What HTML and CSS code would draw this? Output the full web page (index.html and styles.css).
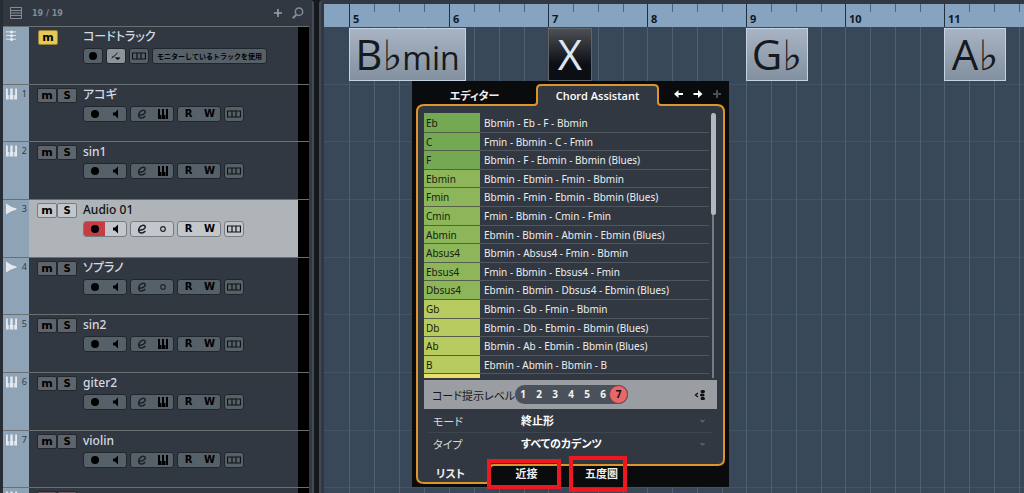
FILE: index.html
```html
<!DOCTYPE html>
<html lang="ja">
<head>
<meta charset="utf-8">
<title>Project</title>
<link rel="stylesheet" href="styles.css">
</head>
<body>
<svg class="defs" width="0" height="0" aria-hidden="true">
  <symbol id="dot" viewBox="0 0 10 10"><circle cx="5" cy="5" r="4"/></symbol>
  <symbol id="ring" viewBox="0 0 10 10"><circle cx="5" cy="5" r="2.3" fill="none" stroke="#222" stroke-width="1.2"/></symbol>
  <symbol id="speaker" viewBox="0 0 10 10"><path d="M2 3.5h2L7 .5v9L4 6.500H2z"/></symbol>
  <symbol id="edit" viewBox="0 0 10 10"><path d="M2 6.200C5 6.200 8.500 5 8.300 2.800 8 .6 4.500.8 2.700 3.200 1 5.500 1.300 8.700 4 8.900 5.800 9 7.300 8.200 8.300 7" fill="none" stroke="#1b2025" stroke-width="1.500"/></symbol>
  <symbol id="keys" viewBox="0 0 12 10"><path d="M1 0h2v6h1V10H1zM5 0h2v6h1v4H4.500V6H5zM9 0h2v10H8.500V6H9z"/></symbol>
  <symbol id="lanes" viewBox="0 0 14 8"><path d="M.5 1h13v6H.5zM5 1v6M9 1v6" fill="none" stroke="#111" stroke-width="1.2"/></symbol>
  <symbol id="piano" viewBox="0 0 12 12"><path d="M0 0h2v7h1v5H0zM4 7h.7V0h2.600v7H8v5H4zM10 0h2v12H9V7h1z"/></symbol>
  <symbol id="wave" viewBox="0 0 12 12"><path d="M0 0Q5 4 11.500 5.500v1Q5 8 0 12z"/></symbol>
  <symbol id="chords" viewBox="0 0 12 12"><path d="M0 1.500h11M0 5.500h11M0 9.500h11" stroke="#e4eaf0"/><circle cx="6" cy="1.700" r="1.700"/><circle cx="6" cy="5.700" r="1.700"/><circle cx="6" cy="9.700" r="1.700"/></symbol>
</svg>
<div class="app">
  <section class="tracks">
    <header class="tracks-head">
      <svg class="list-icon" viewBox="0 0 12 12"><path d="M.5.5h11v11H.5zM1 3.500h10M1 6h10M1 8.500h10" fill="none" stroke="#858b91"/></svg>
      <span class="count">19 / 19</span>
      <button class="plain" aria-label="Add track"><svg viewBox="0 0 8 8" width="8" height="8"><path d="M4 0v8M0 4h8" stroke="#9aa0a6" stroke-width="1.600"/></svg></button>
      <button class="plain" aria-label="Search"><svg viewBox="0 0 12 12" width="12" height="12"><circle cx="7" cy="4.700" r="3.700" fill="none" stroke="#858b91" stroke-width="1.500"/><path d="M4.500 7.500L.8 11.300" stroke="#858b91" stroke-width="2"/></svg></button>
    </header>
    <div class="track-list">
      <article class="track">
        <div class="strip"><svg class="kind"><use href="#chords"/></svg></div>
        <div class="ms"><button class="on">m</button></div>
        <div class="info"><h2>コードトラック</h2><div class="ctl">
          <span class="grp one"><button aria-label="Record"><svg><use href="#dot"/></svg></button></span>
          <span class="grp one lit"><button aria-label="Voicing"><svg viewBox="0 0 12 10"><path d="M1 8L8 1" stroke="#111" stroke-width="1.200"/><path d="M1 5.500h3M5 7h6L8 9.500z" stroke="#111" stroke-width=".6"/></svg></button></span>
          <span class="grp one"><button aria-label="Lanes"><svg class="lane"><use href="#lanes"/></svg></button></span>
          <span class="grp"><button class="monitor">モニターしているトラックを使用</button></span>
        </div></div><div class="meter"></div>
      </article>
      <article class="track">
        <div class="strip"><svg class="kind"><use href="#piano"/></svg><span>1</span></div>
        <div class="ms"><button>m</button><button>s</button></div>
        <div class="info"><h2>アコギ</h2><div class="ctl">
          <span class="grp"><button aria-label="Record"><svg><use href="#dot"/></svg></button><button aria-label="Monitor"><svg><use href="#speaker"/></svg></button></span>
          <span class="grp"><button aria-label="Edit"><svg><use href="#edit"/></svg></button><button aria-label="Instrument"><svg class="key"><use href="#keys"/></svg></button></span>
          <span class="grp"><button>R</button><button>W</button></span>
          <span class="grp one"><button aria-label="Lanes"><svg class="lane"><use href="#lanes"/></svg></button></span>
        </div></div><div class="meter"></div>
      </article>
      <article class="track">
        <div class="strip"><svg class="kind"><use href="#piano"/></svg><span>2</span></div>
        <div class="ms"><button>m</button><button>s</button></div>
        <div class="info"><h2>sin1</h2><div class="ctl">
          <span class="grp"><button aria-label="Record"><svg><use href="#dot"/></svg></button><button aria-label="Monitor"><svg><use href="#speaker"/></svg></button></span>
          <span class="grp"><button aria-label="Edit"><svg><use href="#edit"/></svg></button><button aria-label="Instrument"><svg class="key"><use href="#keys"/></svg></button></span>
          <span class="grp"><button>R</button><button>W</button></span>
          <span class="grp one"><button aria-label="Lanes"><svg class="lane"><use href="#lanes"/></svg></button></span>
        </div></div><div class="meter"></div>
      </article>
      <article class="track selected">
        <div class="strip"><svg class="kind"><use href="#wave"/></svg><span>3</span></div>
        <div class="ms"><button>m</button><button>s</button></div>
        <div class="info"><h2>Audio 01</h2><div class="ctl">
          <span class="grp"><button class="armed" aria-label="Record"><svg><use href="#dot"/></svg></button><button aria-label="Monitor"><svg><use href="#speaker"/></svg></button></span>
          <span class="grp"><button aria-label="Edit"><svg><use href="#edit"/></svg></button><button aria-label="Channels"><svg><use href="#ring"/></svg></button></span>
          <span class="grp"><button>R</button><button>W</button></span>
          <span class="grp one"><button aria-label="Lanes"><svg class="lane"><use href="#lanes"/></svg></button></span>
        </div></div><div class="meter"></div>
      </article>
      <article class="track">
        <div class="strip"><svg class="kind"><use href="#wave"/></svg><span>4</span></div>
        <div class="ms"><button>m</button><button>s</button></div>
        <div class="info"><h2>ソプラノ</h2><div class="ctl">
          <span class="grp"><button aria-label="Record"><svg><use href="#dot"/></svg></button><button aria-label="Monitor"><svg><use href="#speaker"/></svg></button></span>
          <span class="grp"><button aria-label="Edit"><svg><use href="#edit"/></svg></button><button aria-label="Channels"><svg><use href="#ring"/></svg></button></span>
          <span class="grp"><button>R</button><button>W</button></span>
          <span class="grp one"><button aria-label="Lanes"><svg class="lane"><use href="#lanes"/></svg></button></span>
        </div></div><div class="meter"></div>
      </article>
      <article class="track">
        <div class="strip"><svg class="kind"><use href="#piano"/></svg><span>5</span></div>
        <div class="ms"><button>m</button><button>s</button></div>
        <div class="info"><h2>sin2</h2><div class="ctl">
          <span class="grp"><button aria-label="Record"><svg><use href="#dot"/></svg></button><button aria-label="Monitor"><svg><use href="#speaker"/></svg></button></span>
          <span class="grp"><button aria-label="Edit"><svg><use href="#edit"/></svg></button><button aria-label="Instrument"><svg class="key"><use href="#keys"/></svg></button></span>
          <span class="grp"><button>R</button><button>W</button></span>
          <span class="grp one"><button aria-label="Lanes"><svg class="lane"><use href="#lanes"/></svg></button></span>
        </div></div><div class="meter"></div>
      </article>
      <article class="track">
        <div class="strip"><svg class="kind"><use href="#piano"/></svg><span>6</span></div>
        <div class="ms"><button>m</button><button>s</button></div>
        <div class="info"><h2>giter2</h2><div class="ctl">
          <span class="grp"><button aria-label="Record"><svg><use href="#dot"/></svg></button><button aria-label="Monitor"><svg><use href="#speaker"/></svg></button></span>
          <span class="grp"><button aria-label="Edit"><svg><use href="#edit"/></svg></button><button aria-label="Instrument"><svg class="key"><use href="#keys"/></svg></button></span>
          <span class="grp"><button>R</button><button>W</button></span>
          <span class="grp one"><button aria-label="Lanes"><svg class="lane"><use href="#lanes"/></svg></button></span>
        </div></div><div class="meter"></div>
      </article>
      <article class="track">
        <div class="strip"><svg class="kind"><use href="#piano"/></svg><span>7</span></div>
        <div class="ms"><button>m</button><button>s</button></div>
        <div class="info"><h2>violin</h2><div class="ctl">
          <span class="grp"><button aria-label="Record"><svg><use href="#dot"/></svg></button><button aria-label="Monitor"><svg><use href="#speaker"/></svg></button></span>
          <span class="grp"><button aria-label="Edit"><svg><use href="#edit"/></svg></button><button aria-label="Instrument"><svg class="key"><use href="#keys"/></svg></button></span>
          <span class="grp"><button>R</button><button>W</button></span>
          <span class="grp one"><button aria-label="Lanes"><svg class="lane"><use href="#lanes"/></svg></button></span>
        </div></div><div class="meter"></div>
      </article>
      <article class="track">
        <div class="strip"><svg class="kind"><use href="#piano"/></svg></div>
        <div class="ms muted"><button aria-label="Mute"></button><button aria-label="Solo"></button></div>
        <div class="info"></div><div class="meter"></div>
      </article>
    </div>
  </section>

  <main class="timeline">
    <div class="bars">
      <div class="bar lead"><div class="tick"></div><div class="lane-area"></div></div>
      <div class="bar wide"><div class="tick">5</div><div class="lane-area"><div class="chord c-min"><span>B</span><i>♭</i><small>min</small></div></div></div>
      <div class="bar"><div class="tick">6</div><div class="lane-area"></div></div>
      <div class="bar"><div class="tick">7</div><div class="lane-area"><div class="chord c-x"><span>X</span></div></div></div>
      <div class="bar"><div class="tick">8</div><div class="lane-area"></div></div>
      <div class="bar"><div class="tick">9</div><div class="lane-area"><div class="chord c-flat"><span>G</span><i>♭</i></div></div></div>
      <div class="bar"><div class="tick">10</div><div class="lane-area"></div></div>
      <div class="bar last"><div class="tick">11</div><div class="lane-area"><div class="chord c-flat"><span>A</span><i>♭</i></div></div></div>
    </div>
  </main>

  <aside class="popup">
    <svg class="frame" viewBox="0 0 317 406" aria-hidden="true"><path d="M5 396V31q0-7 7-7H122q3 0 3-3V8q0-4 4-4H242q4 0 4 4V21q0 3 3 3H305q7 0 7 7V378q0 6-6 6H82q-4 0-4 4v10q0 4-4 4H12q-7 0-7-6z" fill="#313841" stroke="#dc942c" stroke-width="2"/></svg>
    <nav class="tabs">
      <button>エディター</button>
      <button class="current">Chord Assistant</button>
      <span class="nav-icons">
        <button class="plain" aria-label="Back"><svg viewBox="0 0 10 10"><path d="M0 5l4.500-4v3H9v2H4.500v3z"/></svg></button>
        <button class="plain" aria-label="Forward"><svg viewBox="0 0 10 10"><path d="M9.500 5L5 1v3H.5v2H5v3z"/></svg></button>
        <button class="plain dim" aria-label="Add"><svg viewBox="0 0 10 10"><path d="M4 1h2v3h3v2H6v3H4V6H1V4h3z"/></svg></button>
      </span>
    </nav>
    <div class="body">
      <div class="scroll">
        <table class="list">
          <tr class="g1"><th>Eb</th><td>Bbmin - Eb - F - Bbmin</td></tr>
          <tr class="g1"><th>C</th><td>Fmin - Bbmin - C - Fmin</td></tr>
          <tr class="g1"><th>F</th><td>Bbmin - F - Ebmin - Bbmin (Blues)</td></tr>
          <tr class="g2"><th>Ebmin</th><td>Bbmin - Ebmin - Fmin - Bbmin</td></tr>
          <tr class="g2"><th>Fmin</th><td>Bbmin - Fmin - Ebmin - Bbmin (Blues)</td></tr>
          <tr class="g2"><th>Cmin</th><td>Fmin - Bbmin - Cmin - Fmin</td></tr>
          <tr class="g2"><th>Abmin</th><td>Ebmin - Bbmin - Abmin - Ebmin (Blues)</td></tr>
          <tr class="g2"><th>Absus4</th><td>Bbmin - Absus4 - Fmin - Bbmin</td></tr>
          <tr class="g2"><th>Ebsus4</th><td>Fmin - Bbmin - Ebsus4 - Fmin</td></tr>
          <tr class="g2"><th>Dbsus4</th><td>Ebmin - Bbmin - Dbsus4 - Ebmin (Blues)</td></tr>
          <tr class="g3"><th>Gb</th><td>Bbmin - Gb - Fmin - Bbmin</td></tr>
          <tr class="g3"><th>Db</th><td>Bbmin - Db - Ebmin - Bbmin (Blues)</td></tr>
          <tr class="g3"><th>Ab</th><td>Bbmin - Ab - Ebmin - Bbmin (Blues)</td></tr>
          <tr class="g3"><th>B</th><td>Ebmin - Abmin - Bbmin - B</td></tr>
          <tr class="g4"><th></th><td></td></tr>
        </table>
        <div class="rail"><div class="thumb"></div></div>
      </div>
      <div class="level">
        <span class="level-name">コード提示レベル</span>
        <div class="pill" role="radiogroup" aria-label="コード提示レベル">
          <label><input type="radio" name="lv">1</label><label><input type="radio" name="lv">2</label><label><input type="radio" name="lv">3</label><label><input type="radio" name="lv">4</label><label><input type="radio" name="lv">5</label><label><input type="radio" name="lv">6</label><label><input type="radio" name="lv" checked>7</label>
        </div>
        <button class="plain gaps" aria-label="Filter"><svg viewBox="0 0 12 12" width="12" height="12"><path d="M4 4L1.500 6 4 8" fill="none" stroke="#111" stroke-width="1.300"/><path d="M8 2.500h1.500M7.500 6H9M8 9.500h1.500" stroke="#111" stroke-width="3" stroke-linecap="round"/></svg></button>
      </div>
      <div class="field"><label for="mode">モード</label><select id="mode"><option>終止形</option></select></div>
      <div class="field"><label for="type">タイプ</label><select id="type"><option>すべてのカデンツ</option></select></div>
    </div>
    <nav class="views">
      <button class="current">リスト</button>
      <button>近接</button>
      <button>五度圏</button>
    </nav>
    <div class="mark m1"></div>
    <div class="mark m2"></div>
  </aside>
</div>
</body>
</html>
```
FILE: styles.css
```css
* { box-sizing: border-box; }
body { margin: 0; background: #15191d; font-family: "Noto Sans", "Noto Sans CJK JP", sans-serif; font-feature-settings: "palt"; }
button { margin: 0; padding: 0; border: 0; background: none; color: inherit; font: inherit; font-feature-settings: inherit; }
.defs { display: none; }
.app { position: relative; display: flex; height: 100vh; overflow: hidden; }

/* Track list */
.tracks { flex: none; width: 314px; display: flex; flex-direction: column; background: #313841; border-left: 3px solid #262d34; border-right: 2px solid #444b54; border-top-right-radius: 4px; }
.tracks-head { height: 26px; flex: none; display: flex; align-items: center; gap: 10px; padding: 0 8px 0 7px; }
.list-icon { width: 12px; height: 12px; }
.count { flex: 1; color: #858b91; font: bold 8px "DejaVu Sans", sans-serif; }
.plain { display: flex; align-items: center; justify-content: center; }
.track-list { flex: 1; overflow: hidden; margin-right: 3px; }
.track { display: flex; height: 58px; border-top: 1px solid #687071; }
.track:nth-child(3n+2) { height: 57px; }
.strip { width: 26px; flex: none; display: flex; justify-content: space-between; padding: 3px 2px 0 3px; background: #8fa3b7; color: #2f3c49; font-size: 9px; line-height: 12px; }
.kind { width: 11px; height: 12px; fill: #e4eaf0; }
.ms { width: 54px; flex: none; padding: 3px 0 0 8px; display: flex; align-items: flex-start; }
.ms button { width: 20px; height: 15px; border: 1px solid #22282e; border-radius: 2px; background: #5d646b; color: #000; font: bold 11px/11px "DejaVu Sans", sans-serif; }
.ms button + button { text-transform: uppercase; font-size: 10px; }
.ms .on { margin-left: 1px; background: #e6c854; border-color: #9a8435; }
.muted button { background: #6b5f68; }
.info { flex: 1; min-width: 0; }
.info h2 { margin: 0; height: 21px; font-size: 12px; line-height: 19px; font-weight: 500; color: #d5dae0; white-space: nowrap; }
.ctl { display: flex; gap: 3px; }
.grp { display: flex; width: 44px; height: 16px; border: 1px solid #20262c; border-radius: 3px; background: #566069; overflow: hidden; color: #000; font: bold 10px/14px "DejaVu Sans", sans-serif; }
.grp:has(.monitor) { width: 115px; }
.one { width: 20px; }
.grp button { flex: 1; display: flex; align-items: center; justify-content: center; }
.grp svg { width: 10px; height: 10px; }
.grp .key { width: 12px; }
.grp .lane { width: 14px; height: 8px; }
.lit { background: #8d959b; }
.monitor { font: bold 7px/14px "Noto Sans CJK JP", sans-serif; white-space: nowrap; }
.meter { width: 11px; flex: none; background: #000; }
.selected { background: #afb4b8; }
.selected h2 { color: #111; }
.selected .grp, .selected .ms button { background: #c3c7cb; border-color: #777d82; }
.selected .armed { background: #c43d45; }

/* Timeline */
.timeline { flex: 1; min-width: 0; margin-left: 5px; background: #313841; border-left: 2px solid #444b54; padding: 4px 0 0 3px; border-top-left-radius: 4px; overflow: hidden; }
.bars { display: flex; height: 100%; }
.bar { width: 99px; flex: none; display: flex; flex-direction: column; }
.wide { width: 100px; }
.lead { width: 25px; }
.last { flex: 1 0 80px; }
.tick { height: 23px; flex: none; padding: 9px 0 0 3px; border-left: 1px solid #1f3040; color: #101820; font: bold 11px/12px "Open Sans", sans-serif; background: repeating-linear-gradient(90deg, transparent 0 24px, #4b647d 24px 25px) 0 0 / 100% 8px no-repeat #86a3c0; }
.lead .tick { border: 0; background: #86a3c0; }
.lane-area { flex: 1; padding-top: 1px; background: repeating-linear-gradient(90deg, #4e6174 0 1px, transparent 1px 25px), linear-gradient(transparent 57px, #415366 57px 58px, transparent 58px 114px, #415366 114px 115px, transparent 115px 172px, #415366 172px) 0 0 / 100% 173px, #384858; }
.lead .lane-area { background: linear-gradient(transparent 57px, #415366 57px 58px, transparent 58px 114px, #415366 114px 115px, transparent 115px 172px, #415366 172px) 0 0 / 100% 173px, #384858; }
.chord { position: relative; height: 53px; display: flex; align-items: baseline; justify-content: center; border: 1px solid #c5d3e0; background: linear-gradient(#a8b4c4, #8290a0); color: #17191c; font: 400 42px/50px "Open Sans", sans-serif; }
.chord i { font: 42px/42px "DejaVu Sans", sans-serif; }
.chord small { font-size: 32px; line-height: 40px; }
.c-min { width: 117px; }
.c-x { width: 44px; background: linear-gradient(#4c4f53, #0b0e15 70%); border-color: #606468; color: #dce6f0; }
.c-flat { width: 62px; }

/* Chord assistant */
.popup { position: absolute; left: 412px; top: 81px; width: 317px; display: flex; flex-direction: column; background: #0a0b0d; color: #eee; }
.frame { position: absolute; inset: 0; width: 100%; height: 100%; }
.tabs, .body, .views { position: relative; }
.tabs { display: grid; grid-template-columns: 125px 121px 1fr; height: 32px; padding-top: 4px; font-size: 11px; line-height: 22px; font-weight: 600; align-items: start; }
.tabs .current { color: #fff; font-family: "Open Sans", sans-serif; }
.nav-icons { display: flex; gap: 9px; padding: 4px 0 0 16px; }
.nav-icons svg { width: 10px; height: 10px; fill: #fff; }
.nav-icons .dim svg { fill: #4b4e50; }
.body { padding: 0 12px; }
.scroll { display: flex; height: 265px; overflow: hidden; }
.list { flex: 1; border-collapse: collapse; font-size: 10px; line-height: 16px; table-layout: fixed; align-self: flex-start; }
.list tr { height: 19px; }
.list tr:nth-child(5n+2), .list tr:nth-child(5n+4) { height: 18px; }
.list th { width: 56px; padding: 1px 2px 0; text-align: left; font-weight: normal; color: #18210f; border-bottom: 1px solid #566049; }
.list td { padding: 1px 4px 0; border-bottom: 1px solid #50575f; white-space: nowrap; }
.g1 th { background: #75a853; }
.g2 th { background: #8cb659; }
.g3 th { background: #b7cb61; }
.g4 th { background: #e9e06b; }
.rail { width: 8px; display: flex; justify-content: center; background: linear-gradient(#777c82, #777c82) center / 2px 100% no-repeat; }
.thumb { width: 5px; height: 102px; border-radius: 3px; background: #b4b7bc; }
.level { display: flex; align-items: center; height: 29px; margin-top: 2px; padding: 0 11px 0 8px; background: #9a9da1; color: #15181b; }
.level-name { width: 83px; white-space: nowrap; font-size: 11px; }
.pill { display: flex; width: 113px; height: 19px; border-radius: 10px; background: #4a515a; }
.pill label { width: 16px; height: 19px; text-align: center; font-size: 10px; line-height: 19px; font-weight: bold; color: #f4f4f4; }
.pill label:last-child { flex: none; width: 19px; margin-left: -2px; border-radius: 10px; border: 1px solid #873f42; background: #e4696b; color: #111; line-height: 17px; }
.pill input { appearance: none; position: absolute; margin: 0; }
.gaps { margin-left: auto; }
.field { display: flex; align-items: center; height: 22px; margin: 0 4px; padding: 0 5px; font-size: 11px; }
.field + .field { border-top: 1px solid #3d454e; }
.level + .field { margin-top: 1px; }
.field label { width: 84px; color: #d7dade; }
.field select { flex: 1; appearance: none; border: 0; padding: 0 4px; background: conic-gradient(from -45deg at 50% 100%, #555c64 90deg, transparent 0) right 2px center / 6px 3px no-repeat; background: linear-gradient(#555c64, #555c64) right 3px top 8px / 5px 1px no-repeat, linear-gradient(#555c64, #555c64) right 4px top 9px / 3px 1px no-repeat, linear-gradient(#555c64, #555c64) right 5px top 10px / 1px 1px no-repeat; color: #fff; font: bold 11px/18px "Noto Sans", "Noto Sans CJK JP", sans-serif; font-feature-settings: "palt"; }
.views { display: grid; grid-template-columns: 77px 75px 75px; height: 33px; padding-top: 12px; font-size: 11px; line-height: 16px; font-weight: bold; align-items: start; }
.mark { position: absolute; border: 4px solid #ee1820; pointer-events: none; }
.m1 { left: 75px; top: 378px; width: 74px; height: 30px; }
.m2 { left: 157px; top: 375px; width: 58px; height: 36px; }
```
